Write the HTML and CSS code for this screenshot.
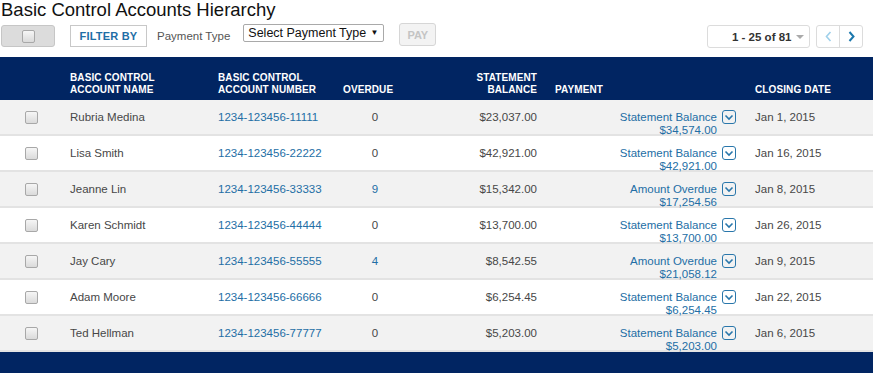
FILE: index.html
```html
<!DOCTYPE html>
<html>
<head>
<meta charset="utf-8">
<title>Basic Control Accounts Hierarchy</title>
<link rel="stylesheet" href="styles.css">
</head>
<body>
<h1 class="title">Basic Control Accounts Hierarchy</h1>
<div class="toolbar">
  <button class="btn-check"><span class="cb"></span></button>
  <button class="btn-filter">FILTER BY</button>
  <span class="lbl">Payment Type</span>
  <div class="select">Select Payment Type <span class="sel-arrow">▼</span></div>
  <button class="btn-pay">PAY</button>
  <div class="right">
    <div class="pager">1 - 25 of 81 <span class="caret"></span></div>
    <div class="nav">
      <span class="nav-btn prev"><svg width="7" height="11" viewBox="0 0 7 11"><polyline points="5.5,1 1.5,5.5 5.5,10" fill="none" stroke="#9fd0ea" stroke-width="1.6"/></svg></span>
      <span class="nav-btn next"><svg width="7" height="11" viewBox="0 0 7 11"><polyline points="1.5,1 5.5,5.5 1.5,10" fill="none" stroke="#1b78ad" stroke-width="2"/></svg></span>
    </div>
  </div>
</div>
<table class="grid">
  <colgroup>
    <col class="c-cb"><col class="c-name"><col class="c-num"><col class="c-over"><col class="c-bal"><col class="c-pay"><col class="c-date">
  </colgroup>
  <thead>
    <tr>
      <th></th>
      <th>BASIC CONTROL<br>ACCOUNT NAME</th>
      <th>BASIC CONTROL<br>ACCOUNT NUMBER</th>
      <th>OVERDUE</th>
      <th class="r">STATEMENT<br>BALANCE</th>
      <th class="th-pay">PAYMENT</th>
      <th class="th-date">CLOSING DATE</th>
    </tr>
  </thead>
  <tbody>
    <tr>
      <td class="cbc"><span class="cb"></span></td>
      <td>Rubria Medina</td>
      <td><a class="lnk">1234-123456-11111</a></td>
      <td class="ctr">0</td>
      <td class="r">$23,037.00</td>
      <td class="pc"><div class="pay"><div class="pay-txt"><a class="lnk">Statement Balance</a><span class="lnk">$34,574.00</span></div><span class="dd"><svg width="10" height="7" viewBox="0 0 10 7"><polyline points="1.5,1.5 5,5 8.5,1.5" fill="none" stroke="#2a77ab" stroke-width="1.6"/></svg></span></div></td>
      <td class="dc">Jan 1, 2015</td>
    </tr>
    <tr>
      <td class="cbc"><span class="cb"></span></td>
      <td>Lisa Smith</td>
      <td><a class="lnk">1234-123456-22222</a></td>
      <td class="ctr">0</td>
      <td class="r">$42,921.00</td>
      <td class="pc"><div class="pay"><div class="pay-txt"><a class="lnk">Statement Balance</a><span class="lnk">$42,921.00</span></div><span class="dd"><svg width="10" height="7" viewBox="0 0 10 7"><polyline points="1.5,1.5 5,5 8.5,1.5" fill="none" stroke="#2a77ab" stroke-width="1.6"/></svg></span></div></td>
      <td class="dc">Jan 16, 2015</td>
    </tr>
    <tr>
      <td class="cbc"><span class="cb"></span></td>
      <td>Jeanne Lin</td>
      <td><a class="lnk">1234-123456-33333</a></td>
      <td class="ctr"><a class="lnk">9</a></td>
      <td class="r">$15,342.00</td>
      <td class="pc"><div class="pay"><div class="pay-txt"><a class="lnk">Amount Overdue</a><span class="lnk">$17,254.56</span></div><span class="dd"><svg width="10" height="7" viewBox="0 0 10 7"><polyline points="1.5,1.5 5,5 8.5,1.5" fill="none" stroke="#2a77ab" stroke-width="1.6"/></svg></span></div></td>
      <td class="dc">Jan 8, 2015</td>
    </tr>
    <tr>
      <td class="cbc"><span class="cb"></span></td>
      <td>Karen Schmidt</td>
      <td><a class="lnk">1234-123456-44444</a></td>
      <td class="ctr">0</td>
      <td class="r">$13,700.00</td>
      <td class="pc"><div class="pay"><div class="pay-txt"><a class="lnk">Statement Balance</a><span class="lnk">$13,700.00</span></div><span class="dd"><svg width="10" height="7" viewBox="0 0 10 7"><polyline points="1.5,1.5 5,5 8.5,1.5" fill="none" stroke="#2a77ab" stroke-width="1.6"/></svg></span></div></td>
      <td class="dc">Jan 26, 2015</td>
    </tr>
    <tr>
      <td class="cbc"><span class="cb"></span></td>
      <td>Jay Cary</td>
      <td><a class="lnk">1234-123456-55555</a></td>
      <td class="ctr"><a class="lnk">4</a></td>
      <td class="r">$8,542.55</td>
      <td class="pc"><div class="pay"><div class="pay-txt"><a class="lnk">Amount Overdue</a><span class="lnk">$21,058.12</span></div><span class="dd"><svg width="10" height="7" viewBox="0 0 10 7"><polyline points="1.5,1.5 5,5 8.5,1.5" fill="none" stroke="#2a77ab" stroke-width="1.6"/></svg></span></div></td>
      <td class="dc">Jan 9, 2015</td>
    </tr>
    <tr>
      <td class="cbc"><span class="cb"></span></td>
      <td>Adam Moore</td>
      <td><a class="lnk">1234-123456-66666</a></td>
      <td class="ctr">0</td>
      <td class="r">$6,254.45</td>
      <td class="pc"><div class="pay"><div class="pay-txt"><a class="lnk">Statement Balance</a><span class="lnk">$6,254.45</span></div><span class="dd"><svg width="10" height="7" viewBox="0 0 10 7"><polyline points="1.5,1.5 5,5 8.5,1.5" fill="none" stroke="#2a77ab" stroke-width="1.6"/></svg></span></div></td>
      <td class="dc">Jan 22, 2015</td>
    </tr>
    <tr>
      <td class="cbc"><span class="cb"></span></td>
      <td>Ted Hellman</td>
      <td><a class="lnk">1234-123456-77777</a></td>
      <td class="ctr">0</td>
      <td class="r">$5,203.00</td>
      <td class="pc"><div class="pay"><div class="pay-txt"><a class="lnk">Statement Balance</a><span class="lnk">$5,203.00</span></div><span class="dd"><svg width="10" height="7" viewBox="0 0 10 7"><polyline points="1.5,1.5 5,5 8.5,1.5" fill="none" stroke="#2a77ab" stroke-width="1.6"/></svg></span></div></td>
      <td class="dc">Jan 6, 2015</td>
    </tr>
  </tbody>
  <tfoot>
    <tr><td colspan="7" class="foot"></td></tr>
  </tfoot>
</table>
</body>
</html>
```

FILE: styles.css
```css
* { box-sizing: border-box; }
body {
  margin: 0;
  background: #fff;
  font-family: "Liberation Sans", Arial, sans-serif;
  color: #444;
}
.title {
  margin: 0;
  font-size: 18.5px;
  font-weight: normal;
  line-height: 20px;
  color: #111;
  padding-left: 1px;
  height: 22px;
}
.toolbar {
  display: flex;
  align-items: flex-start;
  height: 26px;
  margin-bottom: 9px;
  padding-left: 1px;
  padding-right: 10px;
}
button {
  font-family: inherit;
  margin: 0;
  padding: 0;
  cursor: pointer;
}
.btn-check {
  width: 54px;
  height: 22px;
  margin-top: 3px;
  background: #dcdcdc;
  border: 1px solid #c6c6c6;
  border-radius: 3px;
  display: flex;
  align-items: center;
  justify-content: center;
}
.cb {
  display: inline-block;
  width: 13px;
  height: 13px;
  border: 1px solid #a8a8a8;
  border-radius: 2px;
  background: linear-gradient(#f6f6f6, #dadada);
  vertical-align: top;
}
.btn-filter {
  margin-left: 15px;
  margin-top: 3px;
  width: 77px;
  height: 22px;
  background: #fff;
  border: 1px solid #c8c8c8;
  color: #1f6ea6;
  font-size: 11px;
  font-weight: bold;
  letter-spacing: 0.2px;
}
.lbl {
  margin-left: 10px;
  margin-top: 3px;
  line-height: 22px;
  font-size: 11.5px;
  color: #555;
}
.select {
  margin-left: 13px;
  margin-top: 2px;
  width: 141px;
  height: 18px;
  border: 1px solid #a9a9a9;
  border-radius: 2px;
  font-size: 12.5px;
  line-height: 16px;
  color: #111;
  padding-left: 4px;
  display: flex;
  align-items: center;
}
.sel-arrow {
  font-size: 8px;
  margin-left: auto;
  margin-right: 5px;
}
.btn-pay {
  margin-left: 15px;
  margin-top: 1px;
  width: 37px;
  height: 23px;
  background: #f3f3f3;
  border: 1px solid #d6d6d6;
  border-radius: 3px;
  color: #c4c4c4;
  font-size: 11px;
  font-weight: bold;
}
.right {
  margin-left: auto;
  margin-top: 3px;
  display: flex;
  gap: 6px;
}
.pager {
  width: 103px;
  height: 23px;
  border: 1px solid #dcdcdc;
  border-radius: 3px;
  display: flex;
  align-items: center;
  padding-left: 24px;
  font-size: 11.5px;
  font-weight: bold;
  color: #333;
}
.caret {
  display: inline-block;
  margin-left: 5px;
  width: 0;
  height: 0;
  border-left: 4px solid transparent;
  border-right: 4px solid transparent;
  border-top: 4px solid #aaa;
}
.nav {
  display: flex;
  border: 1px solid #dcdcdc;
  border-radius: 3px;
  height: 23px;
}
.nav-btn {
  width: 22px;
  display: flex;
  align-items: center;
  justify-content: center;
}
.nav-btn.prev { border-right: 1px solid #dcdcdc; width: 23px; }

.grid {
  width: 873px;
  table-layout: fixed;
  border-collapse: separate;
  border-spacing: 0;
  font-size: 11.5px;
}
.c-cb { width: 62px; }
.c-name { width: 148px; }
.c-num { width: 125px; }
.c-over { width: 80px; }
.c-bal { width: 130px; }
.c-pay { width: 200px; }
.c-date { width: 128px; }

.grid th {
  background: #012562;
  color: #fff;
  font-size: 10px;
  font-weight: bold;
  line-height: 12px;
  height: 43px;
  text-align: left;
  vertical-align: bottom;
  padding: 0 8px 4px;
  letter-spacing: 0.1px;
}
.grid th.r { text-align: right; }
.grid th.th-pay, .grid th.th-date { padding-left: 10px; }

.grid tbody tr:nth-child(odd) td { background: #f2f2f2; }
.grid tbody tr:nth-child(even) td { background: #fff; }
.grid td {
  height: 36px;
  padding: 11px 8px 0;
  line-height: 13px;
  vertical-align: top;
  border-bottom: 2px solid #e3e3e3;
  color: #474747;
  white-space: nowrap;
}
.grid td.cbc { text-align: center; padding-left: 0; padding-right: 0; }
.grid td.ctr { text-align: center; }
.grid td.r { text-align: right; }
.grid td.dc { padding-left: 10px; }
.grid td.pc { padding-right: 9px; }
.lnk { color: #236ea5; text-decoration: none; }
.pay {
  display: flex;
  justify-content: flex-end;
  align-items: flex-start;
  gap: 5px;
  height: 23px;
}
.pay-txt {
  display: flex;
  flex-direction: column;
  align-items: flex-end;
}
.dd {
  width: 14px;
  height: 14px;
  margin-top: -1px;
  border: 1.5px solid #2a77ab;
  border-radius: 3px;
  display: flex;
  align-items: center;
  justify-content: center;
}
.grid td.foot {
  height: 21px;
  padding: 0;
  background: #012562;
  border: 0;
}
```
